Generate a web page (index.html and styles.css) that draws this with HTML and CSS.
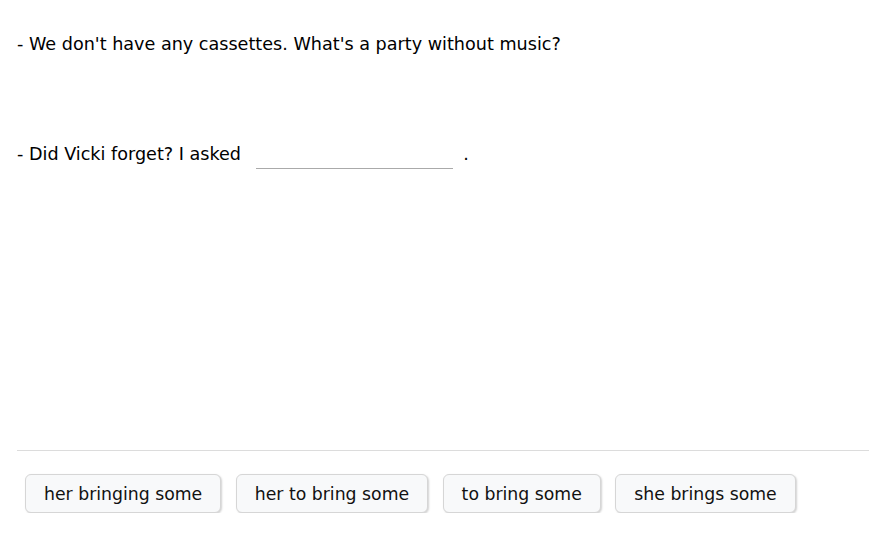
FILE: index.html
```html
<!DOCTYPE html>
<html>
<head>
<meta charset="utf-8">
<link rel="stylesheet" href="styles.css">
</head>
<body>
<div class="page">
  <div class="dialog">
    <p class="line">- We don't have any cassettes. What's a party without music?</p>
    <p class="line second">- Did Vicki forget? I asked <span class="blank"></span> .</p>
  </div>
  <div class="options">
    <button class="opt">her bringing some</button>
    <button class="opt">her to bring some</button>
    <button class="opt">to bring some</button>
    <button class="opt">she brings some</button>
  </div>
</div>
</body>
</html>
```
FILE: styles.css
```css
html, body {
  margin: 0;
  padding: 0;
  background: #fff;
}
body {
  font-family: "DejaVu Sans", Verdana, sans-serif;
  font-size: 17.6px;
  color: #000;
}
.page {
  padding: 0 0 0 17px;
}
.dialog {
  height: 451px;
  border-bottom: 1px solid #dcdcdc;
  box-sizing: border-box;
  padding-top: 32px;
}
.line {
  margin: 0;
  line-height: 24px;
}
.second {
  margin-top: 86px;
}
.blank {
  display: inline-block;
  width: 197px;
  height: 24px;
  border-bottom: 1px solid #aaa;
  vertical-align: -9px;
  margin: 0 5px 0 9px;
}
.options {
  display: flex;
  gap: 14.5px;
  padding: 23px 0 0 8px;
}
.opt {
  font-family: "DejaVu Sans", Verdana, sans-serif;
  font-size: 17.3px;
  color: #111;
  background: #f8f9fa;
  border: 1px solid #d6d6d6;
  border-radius: 6px;
  box-shadow: 1px 1px 2px rgba(0,0,0,0.18);
  height: 39px;
  padding: 0 18px;
}
```
